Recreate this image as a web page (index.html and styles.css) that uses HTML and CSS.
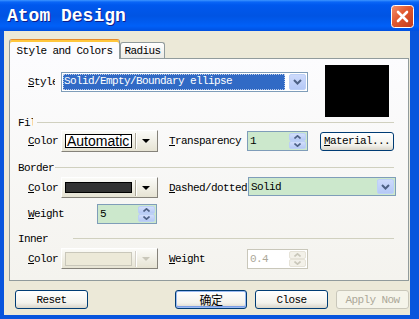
FILE: index.html
```html
<!DOCTYPE html>
<html lang="en">
  <head>
    <meta charset="UTF-8" />
    <meta name="viewport" content="width=device-width, initial-scale=1.0" />
    <title>Atom Design</title>
    <link rel="stylesheet" href="styles.css">
  </head>
  <body>
    <div class="window">
      <!-- 타이틀바 -->
      <div class="titlebar">
        <span class="title">Atom Design</span>
        <div class="close-btn">
          <svg width="23" height="23" viewBox="0 0 23 23">
            <defs>
              <linearGradient id="cg" x1="0" y1="0" x2="1" y2="1">
                <stop offset="0" stop-color="#f3926f" />
                <stop offset="0.45" stop-color="#e1582f" />
                <stop offset="1" stop-color="#c23b1b" />
              </linearGradient>
            </defs>
            <rect x="0.5" y="0.5" width="22" height="22" rx="3" fill="url(#cg)" stroke="#ffffff" />
            <path d="M7 7 L16 16 M16 7 L7 16" stroke="#ffffff" stroke-width="2.6" stroke-linecap="round" />
          </svg>
        </div>
      </div>

      <div class="client">
        <!-- 탭 -->
        <div class="tabs">
          <div class="tab active">Style and Colors</div>
          <div class="tab">Radius</div>
        </div>

        <div class="panel">
          <div class="top">
            <div class="style-row">
              <div class="lbl lbl-clip"><span><u>S</u>tyle</span></div>
              <div class="combo style-combo">
                <div class="combo-sel">Solid/Empty/Boundary ellipse</div>
                <div class="drop-btn">
                  <svg width="9" height="6" viewBox="0 0 9 6"><path d="M1 1 L4.5 4.5 L8 1" fill="none" stroke="#4d6185" stroke-width="2" /></svg>
                </div>
              </div>
            </div>
            <div class="preview"></div>
          </div>

          <!-- Fill -->
          <div class="group-head fill-head">
            <span class="name">Fill</span>
            <span class="line"></span>
          </div>
          <div class="row fill-row">
            <div class="lbl"><u>C</u>olor</div>
            <div class="colorbtn">
              <div class="swatch auto">Automatic</div>
              <div class="sep"></div>
              <div class="tri"></div>
            </div>
            <div class="lbl lbl-trans"><u>T</u>ransparency</div>
            <div class="spin trans-spin">
              <div class="val">1</div>
              <div class="arrows">
                <span><svg width="7" height="4" viewBox="0 0 7 4"><path d="M0.5 3.5 L3.5 0.8 L6.5 3.5" fill="none" stroke="#4d6185" stroke-width="1.6" /></svg></span>
                <span><svg width="7" height="4" viewBox="0 0 7 4"><path d="M0.5 0.5 L3.5 3.2 L6.5 0.5" fill="none" stroke="#4d6185" stroke-width="1.6" /></svg></span>
              </div>
            </div>
            <div class="btn material-btn"><u>M</u>aterial...</div>
          </div>

          <!-- Border -->
          <div class="group-head border-head">
            <span class="name">Border</span>
            <span class="line"></span>
          </div>
          <div class="row border-row">
            <div class="lbl"><u>C</u>olor</div>
            <div class="colorbtn">
              <div class="swatch dark"></div>
              <div class="sep"></div>
              <div class="tri"></div>
            </div>
            <div class="lbl lbl-dash"><u>D</u>ashed/dotted</div>
            <div class="combo dash-combo">
              <div class="combo-text">Solid</div>
              <div class="drop-btn">
                <svg width="9" height="6" viewBox="0 0 9 6"><path d="M1 1 L4.5 4.5 L8 1" fill="none" stroke="#4d6185" stroke-width="2" /></svg>
              </div>
            </div>
          </div>
          <div class="row weight-row">
            <div class="lbl lbl-weight"><u>W</u>eight</div>
            <div class="spin weight-spin">
              <div class="val">5</div>
              <div class="arrows">
                <span><svg width="7" height="4" viewBox="0 0 7 4"><path d="M0.5 3.5 L3.5 0.8 L6.5 3.5" fill="none" stroke="#4d6185" stroke-width="1.6" /></svg></span>
                <span><svg width="7" height="4" viewBox="0 0 7 4"><path d="M0.5 0.5 L3.5 3.2 L6.5 0.5" fill="none" stroke="#4d6185" stroke-width="1.6" /></svg></span>
              </div>
            </div>
          </div>

          <!-- Inner -->
          <div class="group-head inner-head">
            <span class="name">Inner</span>
            <span class="line"></span>
          </div>
          <div class="row inner-row">
            <div class="lbl"><u>C</u>olor</div>
            <div class="colorbtn disabled">
              <div class="swatch off"></div>
              <div class="sep"></div>
              <div class="tri"></div>
            </div>
            <div class="lbl lbl-trans"><u>W</u>eight</div>
            <div class="spin trans-spin disabled">
              <div class="val">0.4</div>
              <div class="arrows">
                <span><svg width="7" height="4" viewBox="0 0 7 4"><path d="M0.5 3.5 L3.5 0.8 L6.5 3.5" fill="none" stroke="#c9c7ba" stroke-width="1.6" /></svg></span>
                <span><svg width="7" height="4" viewBox="0 0 7 4"><path d="M0.5 0.5 L3.5 3.2 L6.5 0.5" fill="none" stroke="#c9c7ba" stroke-width="1.6" /></svg></span>
              </div>
            </div>
          </div>
        </div>

        <!-- 하단 버튼 -->
        <div class="buttons">
          <div class="btn reset-btn">Reset</div>
          <div class="btn ok-btn">确定</div>
          <div class="btn close-btn2">Close</div>
          <div class="btn apply-btn">Apply Now</div>
        </div>
      </div>
    </div>
  </body>
</html>
```

FILE: styles.css
```css
* {
  margin: 0;
  padding: 0;
  box-sizing: border-box;
}

body {
  width: 419px;
  height: 319px;
  overflow: hidden;
  font-family: "Liberation Mono", "Noto Sans CJK SC", monospace;
  font-size: 11px;
  letter-spacing: -0.6px;
  color: #000000;
}

.window {
  width: 419px;
  height: 319px;
  display: flex;
  flex-direction: column;
  background: #0855dd;
}

/* 타이틀바 */
.titlebar {
  height: 31px;
  flex: none;
  display: flex;
  align-items: center;
  padding-left: 7px;
  background: linear-gradient(
    to bottom,
    #3d95ff 0px,
    #0a66f7 2px,
    #0058ee 5px,
    #0054e3 16px,
    #0060f8 26px,
    #0050e0 31px
  );
}

.title {
  font-size: 18px;
  font-weight: bold;
  color: #ffffff;
  letter-spacing: 0;
  text-shadow: 1px 1px #0f1e8a;
}

.close-btn {
  margin-left: auto;
  margin-right: 5px;
  margin-top: 2px;
  width: 23px;
  height: 23px;
}

.client {
  flex: 1;
  margin: 0 9px 4px 4px;
  background: #ece9d8;
  display: flex;
  flex-direction: column;
}

/* 탭 */
.tabs {
  display: flex;
  align-items: flex-end;
  height: 19px;
  margin: 8px 0 0 5px;
  position: relative;
  z-index: 1;
}

.tab {
  height: 16px;
  width: 45px;
  display: flex;
  align-items: center;
  justify-content: center;
  border: 1px solid #919b9c;
  border-bottom: none;
  border-radius: 3px 3px 0 0;
  background: linear-gradient(#ffffff, #ecebe6);
}

.tab.active {
  width: 111px;
  height: 20px;
  margin-bottom: -1px;
  padding-top: 2px;
  background: #fcfcfe;
  border-top: 1px solid #e68b2c;
  box-shadow: inset 0 2px #ffc73c;
}

.panel {
  margin-left: 5px;
  width: 400px;
  height: 223px;
  flex: none;
  border: 1px solid #919b9c;
  background: linear-gradient(#fcfcfe, #f4f3ee);
  padding: 6px 0 0 8px;
  display: flex;
  flex-direction: column;
}

.top {
  display: flex;
  margin-left: 10px;
  height: 52px;
}

.style-row {
  display: flex;
  align-items: center;
  margin-top: 7px;
  height: 20px;
}

.lbl {
  width: 33px;
  flex: none;
  white-space: nowrap;
}

.lbl-clip span {
  display: block;
  width: 27px;
  overflow: hidden;
}

.lbl-trans {
  width: 78px;
  margin-left: 11px;
}

.lbl-dash {
  width: 79px;
  margin-left: 11px;
}

.lbl-weight {
  width: 69px;
}

/* 콤보박스 */
.combo {
  display: flex;
  align-items: center;
  border: 1px solid #7f9db9;
  background: #ffffff;
}

.style-combo {
  width: 247px;
  height: 20px;
  padding-left: 1px;
}

.combo-sel {
  width: 222px;
  height: 16px;
  line-height: 15px;
  padding-left: 1px;
  background: #316ac5;
  color: #ffffff;
  outline: 1px dotted #b8c9e8;
  outline-offset: -1px;
  white-space: nowrap;
  overflow: hidden;
}

.drop-btn {
  margin-left: auto;
  width: 17px;
  height: calc(100% - 2px);
  margin-right: 1px;
  display: flex;
  align-items: center;
  justify-content: center;
  background: linear-gradient(#cddafc, #b5c9f7);
  border: 1px solid #bdd0f7;
  border-radius: 2px;
}

.dash-combo {
  width: 148px;
  height: 19px;
  align-self: flex-start;
  background: #cce8cc;
}

.combo-text {
  padding-left: 2px;
}

.preview {
  width: 64px;
  height: 52px;
  margin-left: 17px;
  background: #000000;
}

/* 그룹 제목 */
.group-head {
  display: flex;
  align-items: center;
  height: 11px;
  flex: none;
}

.group-head .name {
  white-space: nowrap;
  overflow: hidden;
  flex: none;
}

.group-head .line {
  flex: 1;
  height: 1px;
  background: #d0d0bf;
  margin-right: 14px;
}

.fill-head .name {
  width: 15px;
}

.fill-head .line {
  margin-left: 4px;
}

.border-head {
  margin-top: 10px;
}

.border-head .name {
  width: 36px;
}

.border-head .line {
  margin-left: 1px;
}

.inner-head {
  margin-top: 9px;
}

.inner-head .name {
  width: 30px;
}

.inner-head .line {
  margin-left: 25px;
}

.row {
  display: flex;
  align-items: center;
  margin-left: 10px;
  flex: none;
}

.fill-row {
  margin-top: 2px;
  height: 22px;
}

.border-row {
  margin-top: 4px;
  height: 21px;
}

.weight-row {
  margin-top: 6px;
  height: 20px;
}

.inner-row {
  margin-top: 4px;
  height: 21px;
}

/* 색상 버튼 */
.colorbtn {
  width: 97px;
  height: 100%;
  flex: none;
  display: flex;
  align-items: center;
  padding-left: 3px;
  border: 1px solid;
  border-color: #ffffff #85827a #85827a #ffffff;
  background: linear-gradient(#fbfbf8, #e6e3d3);
}

.swatch {
  width: 67px;
  height: 11px;
  border: 1px solid #000000;
  background: #333333;
}

.swatch.auto {
  height: 14px;
  background: #ffffff;
  font-family: "Liberation Sans", sans-serif;
  font-size: 14px;
  letter-spacing: 0;
  line-height: 12px;
  padding-left: 1px;
  overflow: hidden;
}

.swatch.off {
  height: 14px;
  background: #ece9d8;
  border-color: #c9c7ba;
}

.sep {
  width: 2px;
  height: 16px;
  margin-left: 3px;
  border-left: 1px solid #aca899;
  border-right: 1px solid #ffffff;
}

.tri {
  margin-left: 5px;
  width: 0;
  height: 0;
  border-left: 4px solid transparent;
  border-right: 4px solid transparent;
  border-top: 4px solid #000000;
}

.colorbtn.disabled .tri {
  border-top-color: #c9c7ba;
}

.colorbtn.disabled .sep {
  border-left-color: #d4d0c8;
}

/* 스핀 */
.spin {
  display: flex;
  flex: none;
  border: 1px solid #7f9db9;
  background: #cce8cc;
  height: 20px;
}

.trans-spin {
  width: 61px;
}

.weight-spin {
  width: 60px;
}

.spin .val {
  flex: 1;
  padding-left: 2px;
  line-height: 18px;
}

.spin .arrows {
  width: 17px;
  margin: 1px;
  display: flex;
  flex-direction: column;
}

.spin .arrows span {
  flex: 1;
  display: flex;
  align-items: center;
  justify-content: center;
  background: linear-gradient(#d2defb, #b5c9f4);
  border: 1px solid #bcd0f6;
  border-radius: 2px;
}

.spin.disabled {
  border-color: #c9c7ba;
  background: #ffffff;
  color: #aca899;
}

.spin.disabled .arrows span {
  background: #f3f1e9;
  border-color: #e6e3d8;
}

/* 버튼 */
.btn {
  height: 19px;
  width: 73px;
  flex: none;
  display: flex;
  align-items: center;
  justify-content: center;
  border: 1px solid #003c74;
  border-radius: 3px;
  background: linear-gradient(#ffffff, #f3f2ec 70%, #d9d5ca);
  white-space: nowrap;
}

.material-btn {
  width: 74px;
  margin-left: 12px;
}

.buttons {
  display: flex;
  margin-top: 9px;
  padding-left: 11px;
  height: 19px;
}

.ok-btn {
  width: 72px;
  margin-left: 87px;
  box-shadow: inset 0 0 0 1px #9bbaf2, inset 0 -1px 0 1px #7b9ee6;
  font-size: 12px;
}

.close-btn2 {
  margin-left: 8px;
}

.apply-btn {
  margin-left: 8px;
  border-color: #c9c7ba;
  background: #f5f4ea;
  color: #aca899;
}
```
